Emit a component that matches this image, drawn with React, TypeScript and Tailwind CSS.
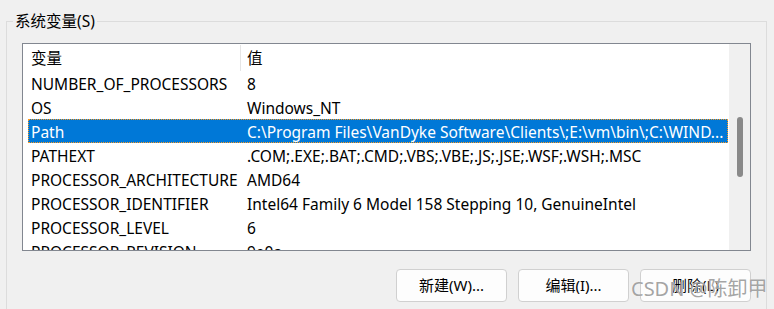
import React from "react";

const rows: [string, string][] = [
  ["NUMBER_OF_PROCESSORS", "8"],
  ["OS", "Windows_NT"],
  ["Path", "C:\\Program Files\\VanDyke Software\\Clients\\;E:\\vm\\bin\\;C:\\WIND..."],
  ["PATHEXT", ".COM;.EXE;.BAT;.CMD;.VBS;.VBE;.JS;.JSE;.WSF;.WSH;.MSC"],
  ["PROCESSOR_ARCHITECTURE", "AMD64"],
  ["PROCESSOR_IDENTIFIER", "Intel64 Family 6 Model 158 Stepping 10, GenuineIntel"],
  ["PROCESSOR_LEVEL", "6"],
  ["PROCESSOR_REVISION", "9e0a"],
];

const font = { fontFamily: '"Noto Sans", "Noto Sans CJK SC", sans-serif' };

export default function App() {
  return (
    <div
      className="relative w-[774px] h-[309px] overflow-hidden bg-[#f0f0f0] text-[15.5px] text-black"
      style={font}
    >
      {/* group box */}
      <div className="relative ml-[6px] mt-[21px] w-[761px] h-[300px] border border-[#dcdcdc] pl-[15px] pt-[21px]">
        <div className="absolute left-[6px] top-[-12px] bg-[#f0f0f0] px-[2px] leading-[22px] whitespace-nowrap">
          系统变量(S)
        </div>

        {/* list view */}
        <div className="flex w-[729px] h-[208px] border border-[#828790] bg-white">
          <div className="flex flex-col w-[705px] overflow-hidden">
            <div className="flex h-[27px] shrink-0 items-center">
              <div className="flex h-[26px] w-[218px] items-center border-r border-[#e5e5e5] pl-[8px] pt-[2px]">变量</div>
              <div className="pl-[6px] pt-[2px]">值</div>
            </div>
            {rows.map(([k, v]) => {
              const sel = k === "Path";
              return (
                <div
                  key={k}
                  className={
                    sel
                      ? "flex h-[24px] shrink-0 items-center pt-[4px] ml-[5px] bg-[#0078d7] text-white outline outline-1 outline-dotted outline-offset-[-1px] outline-[#ff9a1f] whitespace-nowrap"
                      : "flex h-[24px] shrink-0 items-center pt-[4px] whitespace-nowrap"
                  }
                >
                  <div className={sel ? "w-[213px] shrink-0 pl-[3px]" : "w-[218px] shrink-0 pl-[8px]"}>{k}</div>
                  <div className="pl-[6px]">{v}</div>
                </div>
              );
            })}
          </div>
          <div className="relative w-[22px] border-l border-white bg-[#f0f0f0] ml-auto">
            <div className="absolute left-[8px] top-[73px] h-[60px] w-[6px] rounded-[3px] bg-[#8a8a8a]" />
          </div>
        </div>

        {/* buttons */}
        <div className="flex justify-end gap-[11px] w-[729px] mt-[18px]">
          {["新建(W)...", "编辑(I)...", "删除(L)"].map((t) => (
            <button
              key={t}
              className="h-[33px] w-[111px] rounded-[4px] border border-[#d0d0d0] bg-[#fdfdfd] text-[15px] text-black"
            >
              {t}
            </button>
          ))}
        </div>
      </div>

      {/* watermark */}
      <div
        className="absolute left-[631px] top-[276px] text-[20px] leading-[26px] text-[#8c8c8c]/80 whitespace-nowrap"
        style={{ textShadow: "0 0 1px #ffffff" }}
      >
        CSDN @陈卸甲
      </div>
    </div>
  );
}
